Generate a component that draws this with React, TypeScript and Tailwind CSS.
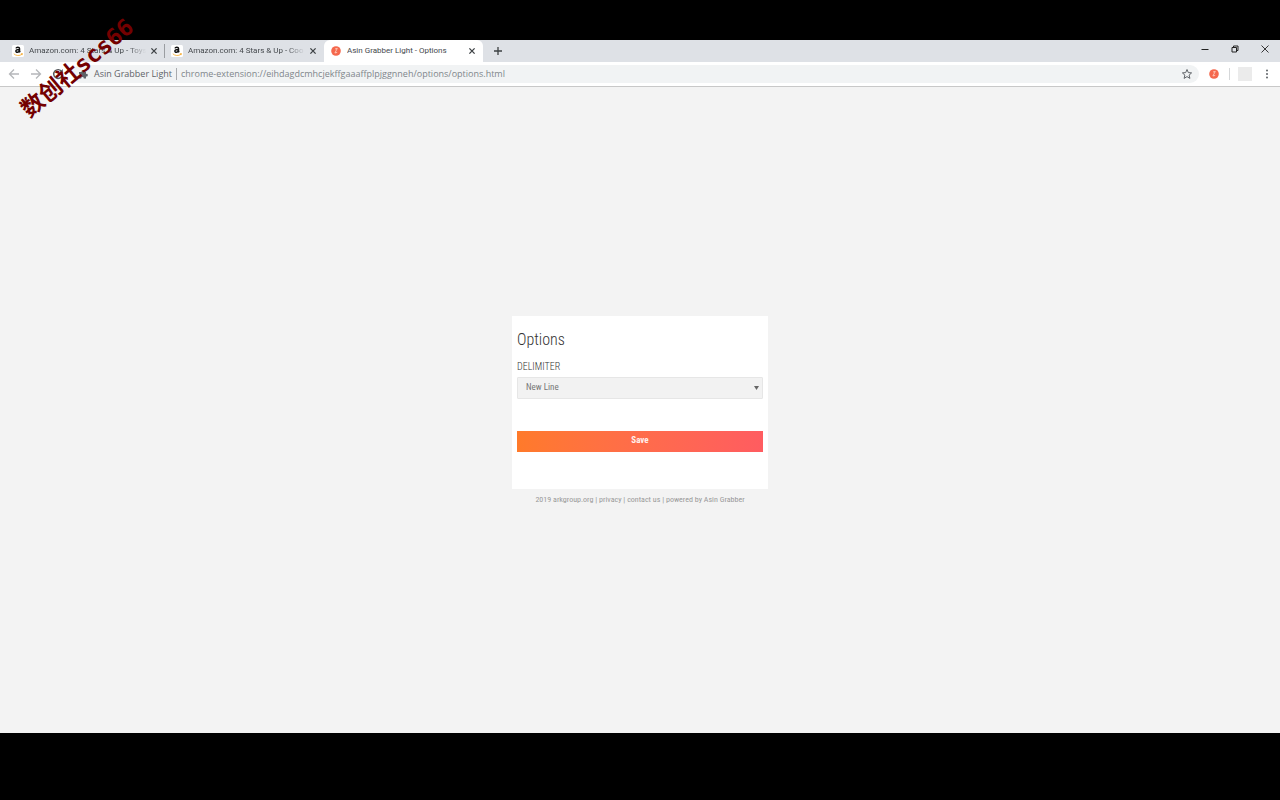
import React, { useState } from "react";

interface Tab {
  id: number;
  title: string;
  icon: "amazon" | "grabber";
}

const TABS: Tab[] = [
  { id: 1, title: "Amazon.com: 4 Stars & Up - Toys", icon: "amazon" },
  { id: 2, title: "Amazon.com: 4 Stars & Up - Coo", icon: "amazon" },
  { id: 3, title: "Asin Grabber Light - Options", icon: "grabber" },
];

const AmazonIcon = () => (
  <svg viewBox="0 0 12 12" className="h-3 w-3 shrink-0" aria-hidden="true">
    <rect width="12" height="12" rx="1.5" fill="#fff" />
    <path
      d="M4 3.4C4.3 1.9 7.5 1.8 7.5 3.5V6.4L8.2 7.3M7.4 4.5C5.1 4.5 3.8 5.1 3.9 6.3C4 7.7 6.6 7.6 7.4 5.7"
      fill="none"
      stroke="#111"
      strokeWidth="1.5"
    />
    <path d="M1.8 8.8C4 10.9 7.5 11 10 9.3M8.9 8.7L10.5 8.6L10 10.1" fill="none" stroke="#f5a623" strokeWidth="0.8" />
  </svg>
);

const GrabberIcon = () => (
  <svg viewBox="0 0 10 10" className="h-2.5 w-2.5 shrink-0" aria-hidden="true">
    <circle cx="5" cy="5" r="4.8" fill="#f5684d" />
    <path d="M4 3L6.3 2.4L3.9 7L6.2 6.4" fill="none" stroke="#ffd5c8" strokeWidth="0.8" />
  </svg>
);

const CloseIcon = () => (
  <svg viewBox="0 0 8 8" className="h-2 w-2" aria-hidden="true">
    <path d="M1.4 1.4L6.6 6.6M6.6 1.4L1.4 6.6" stroke="#3c4043" strokeWidth="1.3" />
  </svg>
);

const TabStrip = () => {
  const [active, setActive] = useState(3);

  return (
    <div className="flex h-[22px] bg-[#dee1e6] pl-1.5">
      {TABS.map((tab) => (
        <div
          key={tab.id}
          className={`flex w-[159px] items-center pr-[3px] pl-1.5 ${
            tab.id === active ? "rounded-t-md bg-white" : ""
          } ${tab.id === 1 ? "bg-[linear-gradient(#9a9da1,#9a9da1)] bg-[length:1px_14px] bg-right bg-no-repeat" : ""}`}
        >
          <button onClick={() => setActive(tab.id)} className="flex min-w-0 flex-1 items-center gap-[5px]">
            <span className="flex w-3 justify-center">
              {tab.icon === "amazon" ? <AmazonIcon /> : <GrabberIcon />}
            </span>
            <span
              className={`flex-1 overflow-hidden text-left font-[Roboto,sans-serif] text-[8px] leading-3 whitespace-nowrap text-[#45494d] ${
                tab.id === active ? "" : "mask-r-from-85%"
              }`}
            >
              {tab.title}
            </span>
          </button>
          <button aria-label="Close tab" className="flex h-4 w-4 items-center justify-center">
            <CloseIcon />
          </button>
        </div>
      ))}
      <button aria-label="New tab" className="flex w-[30px] items-center justify-center">
        <svg viewBox="0 0 10 10" className="h-2.5 w-2.5">
          <path d="M5 1V9M1 5H9" stroke="#3c4043" strokeWidth="1.3" />
        </svg>
      </button>

      <div className="ml-auto flex h-[18px]">
        <button aria-label="Minimize" className="flex w-[30px] items-center justify-center">
          <svg viewBox="0 0 8 8" className="h-2 w-2">
            <path d="M0.5 4.5H7.5" stroke="#222" strokeWidth="1" />
          </svg>
        </button>
        <button aria-label="Restore" className="flex w-[30px] items-center justify-center">
          <svg viewBox="0 0 8 8" className="h-2 w-2" fill="none" stroke="#222">
            <path d="M1 2.5H5.5V7H1ZM2.5 2.5V1H7V5.5H5.5" />
          </svg>
        </button>
        <button aria-label="Close" className="flex w-[30px] items-center justify-center">
          <svg viewBox="0 0 8 8" className="h-2 w-2">
            <path d="M0.5 0.5L7.5 7.5M7.5 0.5L0.5 7.5" stroke="#222" strokeWidth="0.9" />
          </svg>
        </button>
      </div>
    </div>
  );
};

const Toolbar = () => (
  <div className="flex h-[25px] items-center border-b border-[#c8c8c8] bg-white pr-2 pl-2">
    <button aria-label="Back" className="mr-2.5">
      <svg viewBox="0 0 12 12" className="h-3 w-3" fill="none" stroke="#b5b7ba" strokeWidth="1.3">
        <path d="M11 6H1.5M6 1.5L1.5 6L6 10.5" />
      </svg>
    </button>
    <button aria-label="Forward" className="mr-2.5">
      <svg viewBox="0 0 12 12" className="h-3 w-3" fill="none" stroke="#b5b7ba" strokeWidth="1.3">
        <path d="M1 6H10.5M6 1.5L10.5 6L6 10.5" />
      </svg>
    </button>
    <button aria-label="Reload" className="mr-2">
      <svg viewBox="0 0 12 12" className="h-3 w-3" fill="none" stroke="#55595d" strokeWidth="1.4">
        <path d="M9.8 3.6A4.4 4.4 0 1 0 10.4 7" />
        <path d="M10.8 1V5H6.8Z" fill="#55595d" stroke="none" />
      </svg>
    </button>
    <div className="flex h-[18px] flex-1 items-center rounded-full bg-[#f1f3f4] px-1.5 text-[9px] leading-3">
      <svg viewBox="0 0 10 10" className="mr-1.5 h-2.5 w-2.5" fill="#5f6368" aria-hidden="true">
        <path d="M1 3H3.4A1.3 1.3 0 1 1 6 3H8V5A1.3 1.3 0 1 1 8 7.4V9.4H5.8A1.3 1.3 0 0 0 3.2 9.4H1V7.2A1.3 1.3 0 0 0 1 4.8Z" />
      </svg>
      <span className="text-[#5f6368]">Asin Grabber Light</span>
      <span className="mx-1 h-3 w-px bg-[#a9abae]" />
      <span className="text-[#80868b]">
        chrome-extension://eihdagdcmhcjekffgaaaffplpjggnneh/options/options.html
      </span>
      <button aria-label="Bookmark this page" className="ml-auto">
        <svg viewBox="0 0 12 12" className="h-3 w-3" fill="none" stroke="#5f6368" strokeWidth="1">
          <path d="M6 1.5L7.3 4.6L10.6 4.9L8.1 7.1L8.9 10.4L6 8.6L3.1 10.4L3.9 7.1L1.4 4.9L4.7 4.6Z" />
        </svg>
      </button>
    </div>
    <button aria-label="Asin Grabber Light" className="ml-2.5">
      <GrabberIcon />
    </button>
    <span className="mx-2 ml-2.5 h-3 w-px bg-[#d5d7d9]" />
    <span className="h-3.5 w-3.5 bg-[#ebebeb]" />
    <button aria-label="Menu" className="ml-2.5">
      <svg viewBox="0 0 10 10" className="h-2.5 w-2.5" fill="#5f6368">
        <circle cx="5" cy="1.4" r="1" />
        <circle cx="5" cy="5" r="1" />
        <circle cx="5" cy="8.6" r="1" />
      </svg>
    </button>
  </div>
);

const OptionsPage = () => {
  const [delimiter, setDelimiter] = useState("newline");

  return (
    <main className="flex flex-1 flex-col items-center justify-center bg-[#f3f3f3] pt-0.5 font-['Roboto_Condensed','Liberation_Sans_Narrow',Roboto,sans-serif]">
      <form
        onSubmit={(e) => e.preventDefault()}
        className="flex w-1/5 flex-col bg-white px-[5px] pt-[13px] pb-[37px]"
      >
        <h1 className="text-[16px] leading-[22px] font-light text-[#333]">Options</h1>
        <label htmlFor="delimiter" className="mt-2.5 text-[10px] leading-3 font-light text-[#333]">
          DELIMITER
        </label>
        <div className="relative mt-1">
          <select
            id="delimiter"
            value={delimiter}
            onChange={(e) => setDelimiter(e.target.value)}
            className="block h-[22px] w-full appearance-none rounded-[1px] border border-[#e6e6e6] bg-[#f2f2f2] px-2 text-[9px] text-[#777]"
          >
            <option value="newline">New Line</option>
            <option value="comma">Comma</option>
            <option value="tab">Tab</option>
          </select>
          <svg viewBox="0 0 5 5" className="pointer-events-none absolute top-2 right-1 h-[5px] w-[5px]" aria-hidden="true">
            <path d="M0 1H5L2.5 5Z" fill="#666" />
          </svg>
        </div>
        <button className="mt-8 h-[21px] bg-gradient-to-r from-[#ff7a2a] to-[#ff5c60] text-[9px] font-bold text-[#fff0ec]">
          Save
        </button>
      </form>
      <footer className="mt-1 text-[8px] leading-[14px] text-[#999]">
        2019 <a href="#">arkgroup.org</a> | <a href="#">privacy</a> | <a href="#">contact us</a> | powered by{" "}
        <a href="#">Asin Grabber</a>
      </footer>
    </main>
  );
};

const App: React.FC = () => {
  return (
    <div className="relative flex min-h-screen flex-col overflow-hidden bg-black pt-10 pb-[67px] font-['Segoe_UI','Open_Sans','Noto_Sans',sans-serif]">
      <TabStrip />
      <Toolbar />
      <OptionsPage />
      <div className="pointer-events-none absolute top-[52px] left-2 -rotate-40 font-['DejaVu_Sans_Mono','Noto_Sans_CJK_SC',monospace] text-[23px] leading-8 font-bold whitespace-nowrap text-[#740000]">
        数创社scs66
      </div>
    </div>
  );
};

export default App;
